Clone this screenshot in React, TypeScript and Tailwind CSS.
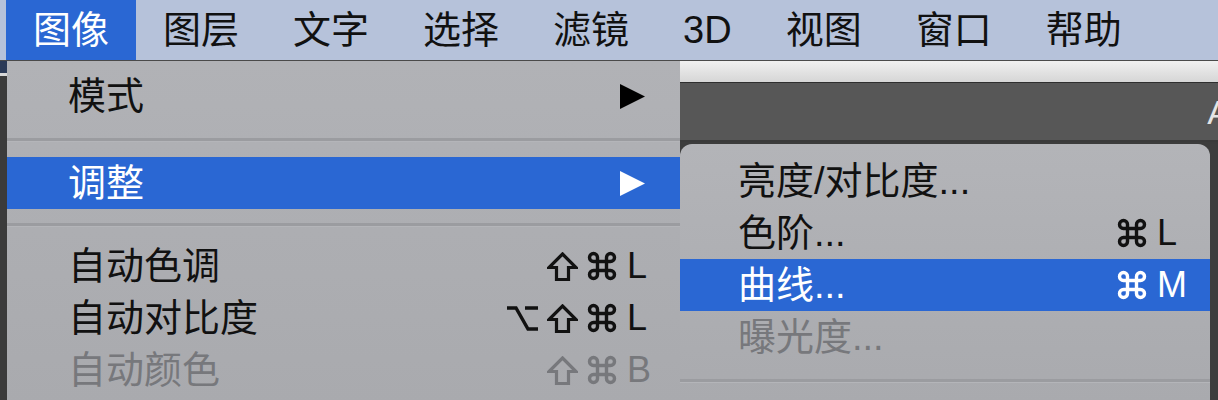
import React from 'react';

const FONT = "font-['Liberation_Sans','Noto_Sans_CJK_SC',sans-serif]";

const menuBar = ['图像', '图层', '文字', '选择', '滤镜', '3D', '视图', '窗口', '帮助'];

function Arrow({ white }: { white?: boolean }) {
  return (
    <svg width="25" height="25" viewBox="0 0 25 25" className="shrink-0">
      <polygon points="0,0 25,12.5 0,25" fill={white ? '#ffffff' : '#000000'} />
    </svg>
  );
}

// modifier key symbols: shift, command, option
function ModKey({ k }: { k: 'shift' | 'cmd' | 'opt' }) {
  return (
    <span className="w-[40px] flex justify-center">
      {k === 'shift' && (
        <svg width="31" height="29" viewBox="0 0 31 29" fill="none" stroke="currentColor" strokeWidth="3.2" strokeLinejoin="miter">
          <path d="M15.5 2 L29 15.5 L21.5 15.5 L21.5 27.5 L9.5 27.5 L9.5 15.5 L2 15.5 Z" />
        </svg>
      )}
      {k === 'cmd' && (
        <svg width="30" height="30" viewBox="0 0 30 30" fill="none" stroke="currentColor" strokeWidth="3.4">
          <path d="M10.5 10.5 V6.5 A4 4 0 1 0 6.5 10.5 H23.5 A4 4 0 1 0 19.5 6.5 V23.5 A4 4 0 1 0 23.5 19.5 H6.5 A4 4 0 1 0 10.5 23.5 Z" />
        </svg>
      )}
      {k === 'opt' && (
        <svg width="33" height="28" viewBox="0 0 33 28" fill="none" stroke="currentColor" strokeWidth="3.4">
          <path d="M1 4 H10 L22 25 H32 M19 4 H32" />
        </svg>
      )}
    </span>
  );
}

function Shortcut({ mods, k }: { mods: ('shift' | 'cmd' | 'opt')[]; k: string }) {
  return (
    <div className="flex items-center">
      {mods.map((m, i) => (
        <ModKey key={i} k={m} />
      ))}
      <span className="ml-[5px] w-[53px] text-left text-[36px] leading-none">{k}</span>
    </div>
  );
}

function Separator({ h }: { h: string }) {
  return (
    <div className={`${h} flex items-center`}>
      <div className="w-full h-[4px] bg-[#9b9ca0] border-b border-[#b4b5b9]" />
    </div>
  );
}

function Row({
  label,
  active,
  disabled,
  indent,
  right,
}: {
  label: string;
  active?: boolean;
  disabled?: boolean;
  indent: string;
  right?: React.ReactNode;
}) {
  const color = active ? 'bg-[#2a67d3] text-white' : disabled ? 'text-[#77787c]' : 'text-[#111111]';
  return (
    <div className={`h-[52px] flex items-center justify-between ${indent} ${color}`}>
      <span className="text-[38px] leading-none">{label}</span>
      {right}
    </div>
  );
}

export default function App() {
  return (
    <div className={`w-[1218px] h-[400px] overflow-hidden bg-[#3c3c3c] flex flex-col ${FONT}`}>
      {/* Menu bar */}
      <div className="h-[61px] shrink-0 flex items-stretch bg-[#b6c2da] border-b border-[#4a4a4a] pl-[6px]">
        {menuBar.map((m, i) => (
          <div
            key={m}
            className={`flex items-center px-[27px] text-[38px] leading-none ${
              i === 0 ? 'bg-[#2a67d3] text-white' : 'text-[#111111]'
            }`}
          >
            {m}
          </div>
        ))}
      </div>

      <div className="flex flex-1">
        {/* background app, left edge */}
        <div className="w-[7px] shrink-0 flex flex-col">
          <div className="h-[12px] bg-[#2b3a57]" />
          <div className="h-[3px] bg-[#d8d8d8]" />
          <div className="flex-1 bg-[#3b3b3b]" />
        </div>

        {/* Image menu */}
        <div className="w-[673px] shrink-0 bg-gradient-to-b from-[#b1b2b6] to-[#a9aaae] pt-[9px]">
          <Row label="模式" indent="pl-[61px] pr-[35px]" right={<Arrow />} />
          <Separator h="h-[35px]" />
          <Row label="调整" indent="pl-[61px] pr-[35px]" active right={<Arrow white />} />
          <Separator h="h-[31px]" />
          <Row label="自动色调" indent="pl-[61px]" right={<Shortcut mods={['shift', 'cmd']} k="L" />} />
          <Row label="自动对比度" indent="pl-[61px]" right={<Shortcut mods={['opt', 'shift', 'cmd']} k="L" />} />
          <Row label="自动颜色" indent="pl-[61px]" disabled right={<Shortcut mods={['shift', 'cmd']} k="B" />} />
        </div>

        {/* background app + submenu */}
        <div className="flex-1 flex flex-col">
          <div className="h-[22px] bg-gradient-to-b from-[#f0f0f0] to-[#d6d6d6] border-b border-[#2e2e2e]" />
          <div className="h-[59px] bg-[#575757] border-b-2 border-[#3a3a3a] flex items-center justify-end">
            <span className="text-[34px] leading-none text-[#e4e4e4] mr-[-12px]">A</span>
          </div>
          <div className="flex flex-1 pt-[2px]">
            <div className="w-[530px] rounded-t-[12px] bg-gradient-to-b from-[#b3b4b8] to-[#a9aaae] pt-[11px]">
              <Row label="亮度/对比度..." indent="pl-[58px]" />
              <Row label="色阶..." indent="pl-[58px]" right={<Shortcut mods={['cmd']} k="L" />} />
              <Row label="曲线..." indent="pl-[58px]" active right={<Shortcut mods={['cmd']} k="M" />} />
              <Row label="曝光度..." indent="pl-[58px]" disabled />
              <Separator h="h-[35px]" />
            </div>
            <div className="flex-1 bg-[#3d3d3d]" />
          </div>
        </div>
      </div>
    </div>
  );
}
